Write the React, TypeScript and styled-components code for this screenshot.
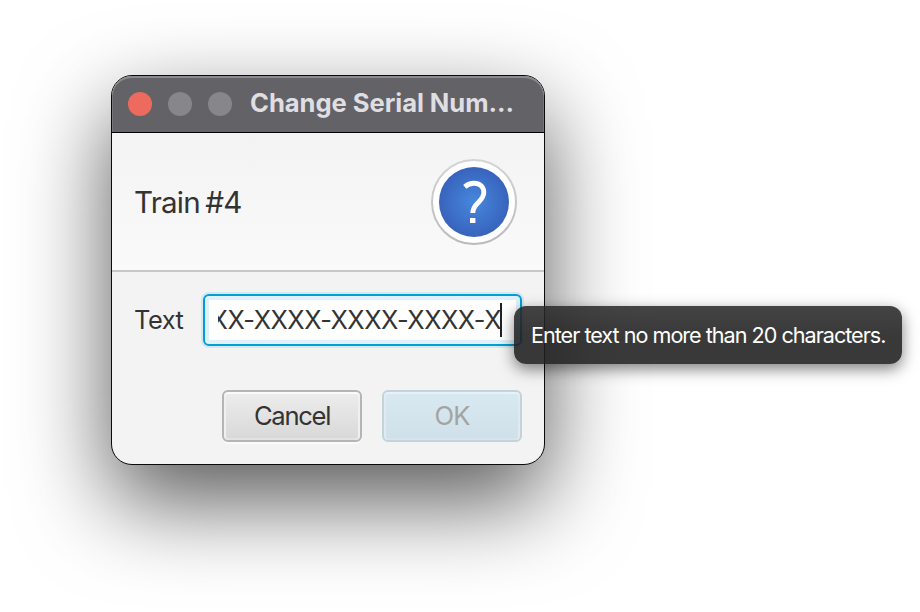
import React from "react";
import styled, { createGlobalStyle } from "styled-components";

const GlobalStyle = createGlobalStyle`
  *, *::before, *::after { box-sizing: border-box; }
  html, body { margin: 0; background: #fff; overflow: hidden; }
  body { font-family: Inter, "Liberation Sans", sans-serif; color: #333; }
`;

const Desktop = styled.main`
  height: 612px;
  padding: 75px 0 0 111px;
  background: #fff;
`;

const Dialog = styled.section`
  position: relative;
  display: flex;
  flex-direction: column;
  width: 434px;
  height: 390px;
  border: 1px solid #0a0a0a;
  border-radius: 21px;
  background: #f3f3f3;
  box-shadow: 0 36px 90px rgba(0, 0, 0, 0.66);
`;

const TitleBar = styled.header`
  display: flex;
  align-items: center;
  height: 57px;
  padding: 0 0 0 16px;
  border-bottom: 1px solid #000;
  border-radius: 20px 20px 0 0;
  background: #636267;
  box-shadow: inset 0 2px 0 #8b8b8e, inset 1px 0 0 #77767a, inset -1px 0 0 #77767a;
`;

const Light = styled.span<{ $color: string }>`
  width: 24px;
  height: 24px;
  margin-right: 16px;
  border-radius: 50%;
  background: ${(p) => p.$color};
`;

const Label = styled.span<{ $size: number; $spacing: number }>`
  font-size: ${(p) => p.$size}px;
  letter-spacing: ${(p) => p.$spacing}px;
  line-height: 32px;
  white-space: nowrap;
`;

const Title = styled(Label)`
  margin: -2px 0 0 2px;
  font-weight: 700;
  color: #dfdee3;
`;

const Heading = styled(Label)`
  word-spacing: -2px;
`;

const HeaderPanel = styled.div`
  display: flex;
  align-items: center;
  justify-content: space-between;
  height: 139px;
  padding: 0 27px 0 22px;
  border-bottom: 2px solid #c8c8c8;
  background: linear-gradient(#f3f3f3, #fafafa);
`;

const QuestionIcon = styled.svg`
  display: block;
  width: 86px;
  height: 86px;
`;

const FieldRow = styled.div`
  display: flex;
  align-items: center;
  justify-content: space-between;
  height: 52px;
  margin: 22px 22px 0 22px;
`;

const Field = styled.div`
  display: flex;
  align-items: center;
  width: 319px;
  height: 52px;
  padding: 0 18px 0 13px;
  border: 2px solid #039ed3;
  border-radius: 6px;
  background: #fff;
  box-shadow: 0 0 0 2px #d3e8f0, inset 0 0 0 4px #e0f2f8;
`;

const FieldText = styled.div`
  display: flex;
  flex: 1;
  justify-content: flex-end;
  height: 36px;
  align-items: center;
  overflow: hidden;
`;

const Caret = styled.i`
  flex: none;
  width: 2px;
  height: 34px;
  margin-left: -1px;
  background: #222;
`;

const Actions = styled.footer`
  display: flex;
  justify-content: flex-end;
  gap: 20px;
  margin: 44px 22px 0 0;
`;

const Button = styled.button<{ $muted?: boolean }>`
  display: flex;
  align-items: center;
  justify-content: center;
  width: 140px;
  height: 52px;
  padding: 0;
  border: 2px solid ${(p) => (p.$muted ? "#c4d2d9" : "#b5b5b5")};
  border-radius: 6px;
  color: ${(p) => (p.$muted ? "#a3a3a3" : "#333")};
  font-family: inherit;
  background: ${(p) => (p.$muted ? "linear-gradient(#d9e9f1, #cfe0e8)" : "linear-gradient(#ededed, #d8d8d8)")};
  box-shadow: ${(p) =>
    p.$muted
      ? "inset 0 2px 0 #e6f2f7, inset 2px 0 0 #dfebf1, inset -2px 0 0 #dfebf1, inset 0 -2px 0 #d6e5ec"
      : "0 2px 0 #fafafa, inset 0 2px 0 #fbfbfb, inset 2px 0 0 #f0f0f0, inset -2px 0 0 #f0f0f0, inset 0 -2px 0 #e2e2e2"};
`;

const Tooltip = styled.div`
  position: absolute;
  left: 402px;
  top: 230px;
  display: flex;
  align-items: center;
  width: 387.5px;
  height: 58px;
  padding: 0 0 0 17px;
  border-radius: 12px;
  color: #fff;
  background: linear-gradient(rgba(42, 42, 42, 0.88), rgba(30, 30, 30, 0.88) 50%);
  box-shadow: 0 5px 15px rgba(0, 0, 0, 0.5);
`;

export default function App() {
  return (
    <>
      <GlobalStyle />
      <Desktop>
        <Dialog>
          <TitleBar>
            <Light $color="#ed6a5e" />
            <Light $color="#87868b" />
            <Light $color="#87868b" />
            <Title $size={25.6} $spacing={-0.05}>Change Serial Num...</Title>
          </TitleBar>
          <HeaderPanel>
            <Heading $size={29.6} $spacing={-0.8}>Train #4</Heading>
            <QuestionIcon viewBox="0 0 86 86">
              <defs>
                <radialGradient id="disc">
                  <stop offset="0" stopColor="#4788dc" />
                  <stop offset="1" stopColor="#3863bd" />
                </radialGradient>
                <linearGradient id="ring" x2="0" y2="1">
                  <stop offset="0" stopColor="#d4d4d4" />
                  <stop offset="1" stopColor="#bababa" />
                </linearGradient>
              </defs>
              <circle cx="43" cy="43" r="42" fill="#fff" stroke="url(#ring)" strokeWidth="2" />
              <circle cx="43" cy="43" r="35" fill="url(#disc)" />
              <path
                d="M33.8 27.8C36.5 25.4 39.5 24.2 43 24.2C49 24.2 52.8 28 52.8 33.6C52.8 43 41.8 43.5 41.8 54"
                fill="none"
                stroke="#fff"
                strokeWidth="4.9"
              />
              <rect x="39" y="59" width="5.4" height="5" fill="#fff" />
            </QuestionIcon>
          </HeaderPanel>
          <FieldRow>
            <Label $size={25.4} $spacing={-0.5}>Text</Label>
            <Field>
              <FieldText>
                <Label $size={25.4} $spacing={-0.48}>XX-XXXX-XXXX-XXXX-X</Label>
              </FieldText>
              <Caret />
            </Field>
          </FieldRow>
          <Actions>
            <Button><Label $size={25.6} $spacing={-1.3}>Cancel</Label></Button>
            <Button $muted disabled><Label $size={25.6} $spacing={-0.9}>OK</Label></Button>
          </Actions>
          <Tooltip>
            <Label $size={21.6} $spacing={-1}>Enter text no more than 20 characters.</Label>
          </Tooltip>
        </Dialog>
      </Desktop>
    </>
  );
}
